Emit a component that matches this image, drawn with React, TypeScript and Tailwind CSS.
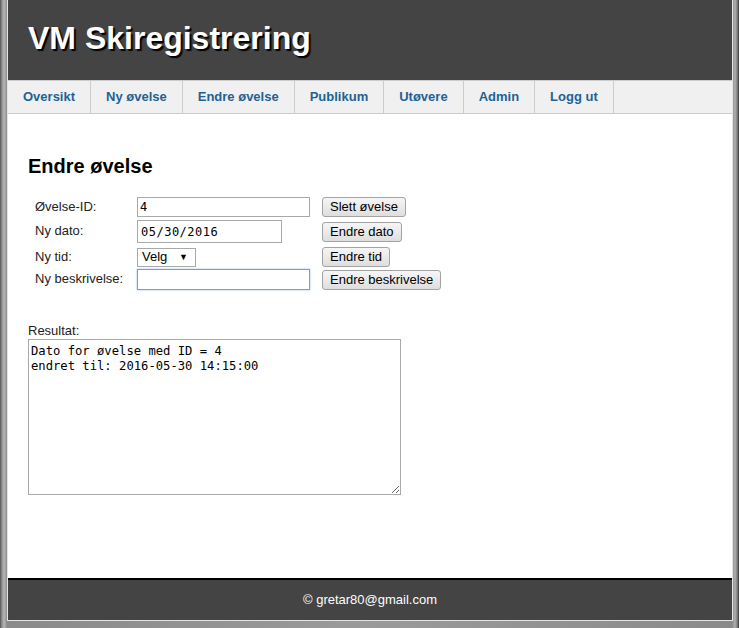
import React from "react";

const navItems = ["Oversikt", "Ny øvelse", "Endre øvelse", "Publikum", "Utøvere", "Admin", "Logg ut"];

function Btn({ children }: { children: React.ReactNode }) {
  return (
    <button className="h-[20px] px-[7px] border border-[#a3a3a3] rounded-[3px] bg-[linear-gradient(#f6f6f6,#dedede)] text-[13px] leading-[16px] text-black font-['Liberation_Sans',Arial,sans-serif] whitespace-nowrap">
      {children}
    </button>
  );
}

export default function App() {
  const sans = "font-['Liberation_Sans',Arial,sans-serif]";
  const mono = "font-['DejaVu_Sans_Mono',monospace]";
  return (
    <div className={`w-[739px] h-[628px] bg-[linear-gradient(90deg,#4a4a4a_0px,#7a7a7a_1px,#b8b8b8_4px,#8a8a8a_7px,#9a9a9a_50%,#8a8a8a_calc(100%-7px),#b0b0b0_calc(100%-4px),#6a6a6a_calc(100%-1px),#2a2a2a_100%)] pl-[7px] pr-[6px] pb-[7px] flex ${sans}`}>
      <div className="flex-1 flex flex-col border-l border-r border-b border-[#e4e4e4] bg-white min-w-0">
        <header className="h-[80px] bg-[#444444] pl-[20px] pt-[22px] shrink-0">
          <h1 className="text-[32px] leading-[32px] font-bold text-white [text-shadow:2px_2px_1px_#000]">VM Skiregistrering</h1>
        </header>
        <nav className="h-[34px] bg-[#f0f0f0] border-t border-b border-[#cccccc] flex shrink-0">
          {navItems.map((n) => (
            <div key={n} className="px-[15px] border-r border-[#cccccc] flex items-center text-[13px] font-bold text-[#1f6296]">
              {n}
            </div>
          ))}
        </nav>
        <main className="flex-1 bg-white pl-[20px] pt-[40px]">
          <h2 className="text-[20px] leading-[24px] font-bold text-black">Endre øvelse</h2>
          <div className="mt-[19px] pl-[7px] text-[13px] text-[#222]">
            <div className="flex items-center h-[20px]">
              <div className="w-[102px] leading-[15px] -mt-[2px]">Øvelse-ID:</div>
              <div className="w-[185px]">
                <input readOnly value="4" className={`w-[173px] h-[20px] border border-[#a9a9a9] px-[2px] text-[12px] text-black ${mono} outline-none`} />
              </div>
              <Btn>Slett øvelse</Btn>
            </div>
            <div className="flex items-center h-[23px] mt-[3px]">
              <div className="w-[102px] leading-[15px] -mt-[2px]">Ny dato:</div>
              <div className="w-[185px]">
                <input readOnly value="05/30/2016" className={`w-[145px] h-[23px] border border-[#a9a9a9] px-[3px] text-[12px] tracking-[0.5px] text-black ${mono} outline-none`} />
              </div>
              <Btn>Endre dato</Btn>
            </div>
            <div className="flex items-center h-[20px] mt-[4px]">
              <div className="w-[102px] leading-[15px] -mt-[2px]">Ny tid:</div>
              <div className="w-[185px]">
                <div className="w-[59px] h-[19px] border border-[#a9a9a9] bg-white flex items-center justify-between pl-[4px] pr-[7px] text-[13px] text-black">
                  <span>Velg</span>
                  <span className="text-[9px] leading-none">▼</span>
                </div>
              </div>
              <Btn>Endre tid</Btn>
            </div>
            <div className="flex items-center h-[21px] mt-[2px]">
              <div className="w-[102px] leading-[15px] -mt-[2px]">Ny beskrivelse:</div>
              <div className="w-[185px]">
                <input readOnly value="" className="w-[173px] h-[21px] border border-[#6f9fe0] shadow-[0_0_2px_#9cc2f0] outline-none" />
              </div>
              <Btn>Endre beskrivelse</Btn>
            </div>
          </div>
          <div className="mt-[33px] text-[13px] leading-[15px] text-[#222]">Resultat:</div>
          <textarea
            readOnly
            value={"Dato for øvelse med ID = 4\nendret til: 2016-05-30 14:15:00"}
            className={`mt-[1px] block w-[373px] h-[156px] border border-[#a9a9a9] px-[2px] pt-[4px] text-[12.2px] leading-[14.6px] text-black ${mono} outline-none resize`}
          />
        </main>
        <footer className="shrink-0 border-t-2 border-black bg-[#444444] h-[42px] flex items-center justify-center text-white text-[13px]">
          © gretar80@gmail.com
        </footer>
      </div>
    </div>
  );
}
